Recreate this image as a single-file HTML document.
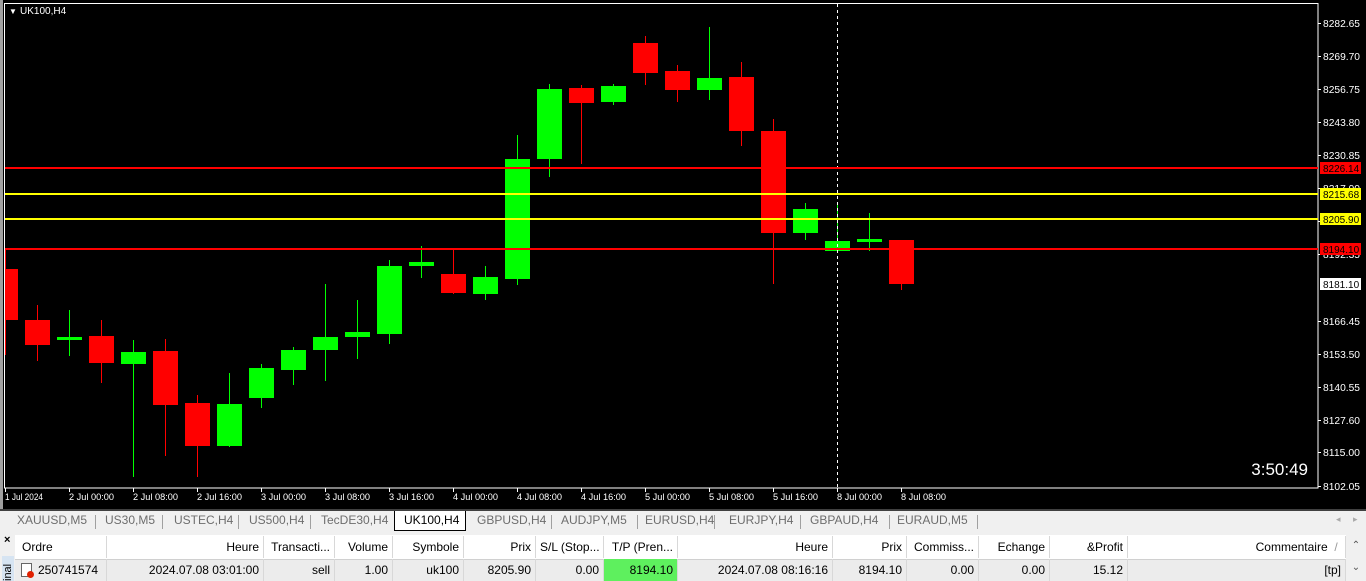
<!DOCTYPE html>
<html><head><meta charset="utf-8"><style>
*{margin:0;padding:0;box-sizing:border-box}
body{width:1366px;height:581px;overflow:hidden;background:#f0f0f0;font-family:"Liberation Sans",sans-serif;position:relative}
.ab{position:absolute}
.tab{position:absolute;top:513px;font-size:12px;color:#6d6d6d}
.sep{position:absolute;top:515px;width:1px;height:14px;background:#a0a0a0}
.cell{position:absolute;font-size:12px;color:#000;height:22px;line-height:22px;border-right:1px solid #d8d8d8;white-space:nowrap;overflow:hidden;padding:0 4px}
.r{text-align:right}
</style></head><body>
<svg class="ab" style="left:0;top:0" width="1366" height="510" xmlns="http://www.w3.org/2000/svg">
<rect width="1366" height="510" fill="#000"/>
<rect x="0" y="0" width="3" height="510" fill="#a0a0a0"/>
<rect x="4.5" y="3.5" width="1313.5" height="484.5" fill="none" stroke="#fff" stroke-width="1"/>
<g id="c"></g>
<line x1="837.5" y1="4" x2="837.5" y2="488" stroke="#fff" stroke-dasharray="3,3"/>
<g stroke-width="2">
<line x1="5" y1="168" x2="1318" y2="168" stroke="#f00"/>
<line x1="5" y1="194" x2="1318" y2="194" stroke="#ff0"/>
<line x1="5" y1="219" x2="1318" y2="219" stroke="#ff0"/>
<line x1="5" y1="249" x2="1318" y2="249" stroke="#f00"/>
</g>
<text x="9" y="14" fill="#fff" font-size="8">▼</text>
<text x="20" y="14" fill="#fff" font-size="10" font-family="Liberation Sans">UK100,H4</text>
<text x="1308" y="475" fill="#fff" font-size="17" text-anchor="end" font-family="Liberation Sans">3:50:49</text>
<g fill="#fff" font-size="10" font-family="Liberation Sans" id="pl"></g>
<g fill="#fff" font-size="9" font-family="Liberation Sans" id="tl"></g>
<rect x="1320" y="162" width="41" height="12" fill="#f00"/><text x="1323" y="172" font-size="10" fill="#000">8226.14</text>
<rect x="1320" y="188" width="41" height="12" fill="#ff0"/><text x="1323" y="198" font-size="10" fill="#000">8215.68</text>
<rect x="1320" y="213" width="41" height="12" fill="#ff0"/><text x="1323" y="223" font-size="10" fill="#000">8205.90</text>
<rect x="1320" y="243" width="41" height="12" fill="#f00"/><text x="1323" y="253" font-size="10" fill="#000">8194.10</text>
<rect x="1320" y="278" width="41" height="12" fill="#fff"/><text x="1323" y="288" font-size="10" fill="#000">8181.10</text>
</svg>
<div class="ab" style="left:0;top:509px;width:1366px;height:2px;background:#404040"></div>
<div class="sep" style="left:95px"></div><div class="sep" style="left:162px"></div><div class="sep" style="left:238px"></div><div class="sep" style="left:310px"></div>
<div class="sep" style="left:551px"></div><div class="sep" style="left:637px"></div><div class="sep" style="left:714px"></div><div class="sep" style="left:800px"></div><div class="sep" style="left:889px"></div><div class="sep" style="left:977px"></div>
<div class="ab" style="left:394px;top:511px;width:72px;height:20px;background:#fff;border:1px solid #000;border-top:none"></div>
<div class="tab" style="left:17px">XAUUSD,M5</div><div class="tab" style="left:105px">US30,M5</div><div class="tab" style="left:174px">USTEC,H4</div><div class="tab" style="left:249px">US500,H4</div><div class="tab" style="left:321px">TecDE30,H4</div><div class="tab" style="left:404px;color:#000">UK100,H4</div><div class="tab" style="left:477px">GBPUSD,H4</div><div class="tab" style="left:561px">AUDJPY,M5</div><div class="tab" style="left:645px">EURUSD,H4</div><div class="tab" style="left:729px">EURJPY,H4</div><div class="tab" style="left:810px">GBPAUD,H4</div><div class="tab" style="left:897px">EURAUD,M5</div>
<div class="ab" style="left:1336px;top:514px;font-size:9px;color:#aaa">◂</div><div class="ab" style="left:1353px;top:514px;font-size:9px;color:#aaa">▸</div>
<div class="ab" style="left:15px;top:535px;width:1331px;height:25px;background:#fff;border-bottom:1px solid #d0d0d0"></div>
<div class="ab" style="left:15px;top:560px;width:1331px;height:21px;background:#ececec"></div>
<div class="ab" style="left:4px;top:534px;font-size:11px;font-weight:bold">×</div>
<div class="ab" style="left:2px;top:556px;width:12px;height:25px;background:#d6e4f2"></div>
<div class="ab" style="left:-4px;top:563px;font-size:11px;transform:rotate(-90deg);transform-origin:center;width:24px">inal</div>
<div class="ab" style="left:1346px;top:535px;width:20px;height:46px;background:#f0f0f0;font-size:10px;color:#555;text-align:center;line-height:22px">⌃<br>⌄</div>
<div id="tb"></div>
<script>
var C=[[5,269,320,250,355,0],[37,320,345,305,361,0],[69,337,340,310,356,1],[101,336,363,320,383,0],[133,352,364,340,477,1],[165,351,405,339,456,0],[197,403,446,395,477,0],[229,404,446,373,447,1],[261,368,398,364,408,1],[293,350,370,347,385,1],[325,337,350,284,381,1],[357,332,337,300,359,1],[389,266,334,260,344,1],[421,262,266,246,278,1],[453,274,293,250,294,0],[485,277,294,266,300,1],[517,159,279,135,285,1],[549,89,159,84,177,1],[581,88,103,85,164,0],[613,86,102,84,105,1],[645,43,73,36,85,0],[677,71,90,65,102,0],[709,78,90,27,100,1],[741,77,131,62,146,0],[773,131,233,119,284,0],[805,209,233,203,240,1],[837,241,251,203,252,1],[869,239,242,213,251,1],[901,240,284,240,290,0]];
var s='';C.forEach(function(c){var col=c[5]?'#0f0':'#f00';var x0=Math.max(5,c[0]-12),x1=c[0]+13;s+='<rect x="'+c[0]+'" y="'+c[3]+'" width="1" height="'+(c[4]-c[3])+'" fill="'+col+'"/>';s+='<rect x="'+x0+'" y="'+c[1]+'" width="'+(x1-x0)+'" height="'+Math.max(3,c[2]-c[1])+'" fill="'+col+'"/>';});
document.getElementById('c').innerHTML=s;
var P=[[23,'8282.65'],[56,'8269.70'],[89,'8256.75'],[122,'8243.80'],[155,'8230.85'],[188,'8217.90'],[221,'8204.95'],[254,'8192.35'],[321,'8166.45'],[354,'8153.50'],[387,'8140.55'],[420,'8127.60'],[452,'8115.00'],[486,'8102.05']];
s='';P.forEach(function(p){s+='<rect x="1318" y="'+p[0]+'" width="3" height="1"/><text x="1323" y="'+(p[0]+4)+'" textLength="37" lengthAdjust="spacingAndGlyphs">'+p[1]+'</text>';});
document.getElementById('pl').innerHTML=s;
var T=['1 Jul 2024','2 Jul 00:00','2 Jul 08:00','2 Jul 16:00','3 Jul 00:00','3 Jul 08:00','3 Jul 16:00','4 Jul 00:00','4 Jul 08:00','4 Jul 16:00','5 Jul 00:00','5 Jul 08:00','5 Jul 16:00','8 Jul 00:00','8 Jul 08:00'];
s='';T.forEach(function(t,i){var x=5+64*i;s+='<rect x="'+x+'" y="488" width="1" height="4"/><text x="'+(x)+'" y="500" textLength="'+(i?45:38)+'" lengthAdjust="spacingAndGlyphs">'+t+'</text>';});
document.getElementById('tl').innerHTML=s;
var cols=[[15,107,'Ordre','250741574',0],[107,264,'Heure','2024.07.08 03:01:00',1],[264,335,'Transacti...','sell',1],[335,393,'Volume','1.00',1],[393,464,'Symbole','uk100',1],[464,536,'Prix','8205.90',1],[536,604,'S/L (Stop...','0.00',1],[604,678,'T/P (Pren...','8194.10',1],[678,833,'Heure','2024.07.08 08:16:16',1],[833,907,'Prix','8194.10',1],[907,979,'Commiss...','0.00',1],[979,1050,'Echange','0.00',1],[1050,1128,'&amp;Profit','15.12',1],[1128,1346,'Commentaire &nbsp;<span style="color:#999">/</span>&nbsp;','[tp]',1]];
s='';cols.forEach(function(c,i){var w=c[1]-c[0];s+='<div class="cell '+(c[4]?'r':'')+'" style="left:'+c[0]+'px;top:536px;width:'+w+'px;'+(i==0?'padding-left:7px':'')+'">'+c[2]+'</div>';
var bg=i==7?'background:#5ef05e;':'';s+='<div class="cell '+(c[4]?'r':'')+'" style="left:'+c[0]+'px;top:559px;width:'+w+'px;'+bg+(i==0?'padding:0 0 0 23px':'')+'">'+c[3]+'</div>';});
s+='<div class="ab" style="left:21px;top:563px;width:11px;height:14px;border:1px solid #666;background:#fff"></div><div class="ab" style="left:27px;top:571px;width:7px;height:7px;border-radius:50%;background:#e02000"></div>';
document.getElementById('tb').innerHTML=s;
</script>
</body></html>
